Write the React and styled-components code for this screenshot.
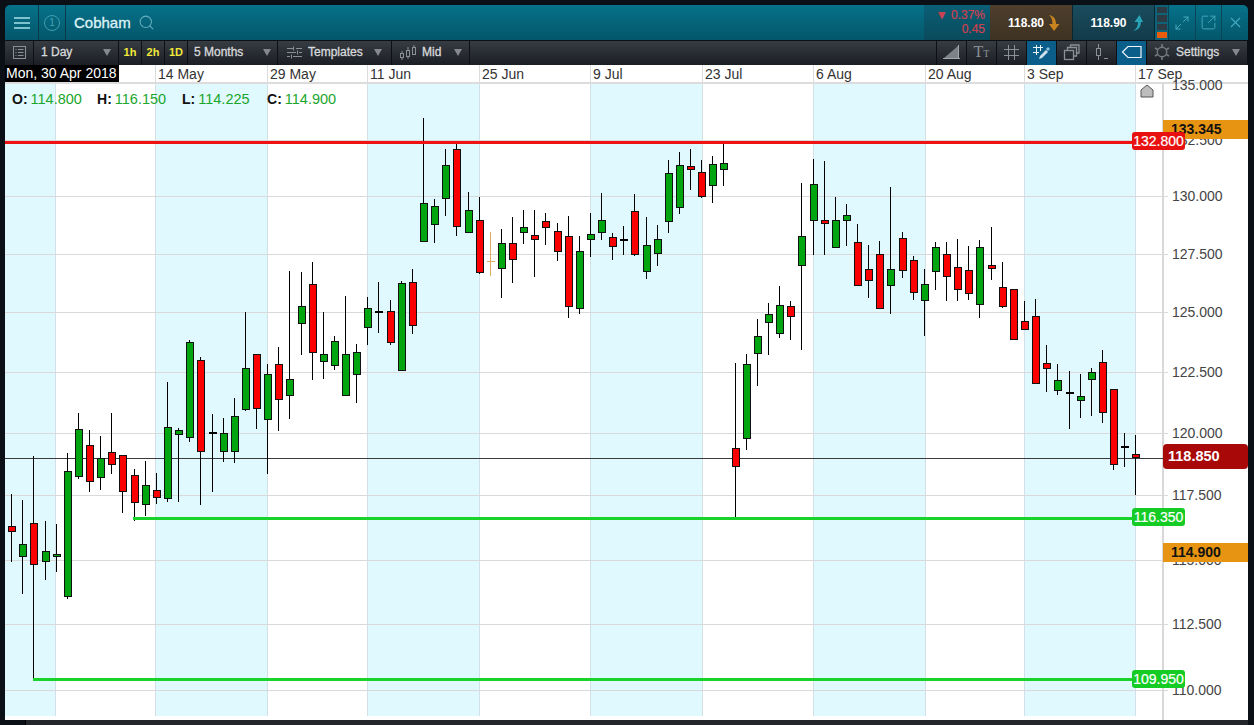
import React from 'react';
import styled, { createGlobalStyle } from 'styled-components';
import { Search, Maximize2, SquareArrowOutUpRight, X } from 'lucide-react';

const GlobalStyle = createGlobalStyle`
  html, body { margin: 0; padding: 0; background: #0a1016; overflow: hidden; }
  * { box-sizing: border-box; }
`;

const FONT = `"Liberation Sans", Arial, sans-serif`;

// high, body top, body bottom, low, kind (g green, r red, d doji, o orange doji)
const CANDLES = [
  [494, 526, 532, 562, 'r'], [500, 544, 557, 594, 'g'], [456, 523, 565, 679, 'r'], [521, 551, 562, 580, 'g'],
  [524, 554, 557, 572, 'g'], [453, 471, 597, 599, 'g'], [413, 429, 477, 479, 'g'], [430, 445, 482, 492, 'r'],
  [436, 458, 478, 490, 'g'], [413, 452, 465, 474, 'r'], [455, 455, 492, 513, 'r'], [469, 475, 503, 521, 'r'],
  [461, 485, 505, 516, 'g'], [473, 490, 498, 504, 'r'], [382, 427, 499, 502, 'g'], [428, 430, 435, 502, 'g'],
  [340, 342, 438, 442, 'g'], [357, 360, 452, 505, 'r'], [414, 432, 433, 492, 'd'], [418, 433, 452, 462, 'g'],
  [398, 416, 452, 463, 'g'], [312, 368, 410, 411, 'g'], [354, 354, 409, 429, 'r'], [364, 374, 420, 474, 'g'],
  [347, 364, 400, 431, 'r'], [271, 379, 396, 419, 'g'], [272, 306, 324, 355, 'g'], [262, 284, 353, 380, 'r'],
  [312, 354, 362, 379, 'g'], [336, 341, 366, 370, 'g'], [296, 354, 396, 396, 'g'], [344, 352, 375, 403, 'g'],
  [297, 308, 328, 345, 'g'], [282, 311, 312, 333, 'd'], [300, 311, 343, 345, 'r'], [281, 283, 371, 371, 'g'],
  [269, 282, 326, 334, 'r'], [118, 203, 242, 242, 'g'], [199, 206, 225, 243, 'g'], [149, 165, 199, 216, 'g'],
  [143, 149, 227, 236, 'r'], [192, 210, 233, 233, 'g'], [197, 220, 273, 274, 'r'], [232, 261, 262, 276, 'o'],
  [229, 243, 269, 298, 'g'], [217, 243, 260, 283, 'r'], [210, 227, 233, 244, 'g'], [210, 235, 240, 277, 'r'],
  [213, 221, 228, 245, 'r'], [223, 231, 252, 261, 'r'], [216, 236, 307, 318, 'r'], [236, 251, 309, 314, 'g'],
  [213, 234, 240, 257, 'g'], [193, 220, 233, 240, 'g'], [233, 237, 247, 260, 'r'], [226, 239, 240, 255, 'd'],
  [194, 211, 255, 256, 'r'], [217, 245, 272, 279, 'g'], [225, 239, 254, 266, 'g'], [160, 173, 222, 233, 'g'],
  [152, 165, 208, 214, 'g'], [149, 166, 170, 190, 'r'], [160, 172, 197, 198, 'r'], [156, 164, 186, 203, 'g'],
  [143, 163, 170, 186, 'g'], [363, 448, 467, 517, 'r'], [354, 364, 439, 450, 'g'], [319, 336, 354, 386, 'g'],
  [303, 314, 323, 355, 'g'], [286, 305, 334, 338, 'g'], [301, 306, 317, 340, 'r'], [183, 236, 266, 350, 'g'],
  [159, 184, 221, 255, 'g'], [161, 220, 224, 255, 'r'], [197, 220, 248, 248, 'g'], [204, 215, 221, 246, 'g'],
  [224, 242, 286, 286, 'r'], [245, 269, 281, 298, 'r'], [241, 254, 309, 309, 'r'], [187, 269, 286, 314, 'g'],
  [232, 238, 271, 278, 'r'], [256, 260, 293, 300, 'r'], [269, 284, 301, 336, 'g'], [242, 247, 272, 290, 'g'],
  [242, 254, 277, 301, 'r'], [239, 267, 290, 301, 'r'], [246, 270, 294, 300, 'r'], [240, 247, 305, 318, 'g'],
  [227, 265, 269, 280, 'r'], [262, 287, 307, 308, 'r'], [289, 289, 340, 340, 'r'], [301, 321, 330, 330, 'r'],
  [299, 316, 384, 384, 'r'], [345, 363, 369, 392, 'r'], [364, 380, 391, 395, 'g'], [371, 392, 393, 429, 'd'],
  [374, 396, 401, 418, 'g'], [368, 372, 380, 416, 'g'], [350, 362, 413, 423, 'r'], [389, 389, 465, 470, 'r'],
  [433, 446, 447, 467, 'd'], [435, 454, 458, 495, 'r'],
];

const BANDS = [[5, 55], [155, 267], [367, 479], [590, 702], [813, 925], [1024, 1135]];
const V_LINES = [55, 155, 267, 367, 479, 590, 702, 813, 925, 1024, 1135];
const PRICES = [
  ['135.000', 85], ['132.500', 140], ['130.000', 196], ['127.500', 254], ['125.000', 312], ['122.500', 372],
  ['120.000', 433], ['117.500', 495], ['115.000', 560], ['112.500', 624], ['110.000', 690],
];
const DATES = [
  ['14 May', 112], ['29 May', 100], ['11 Jun', 112], ['25 Jun', 111], ['9 Jul', 112],
  ['23 Jul', 111], ['6 Aug', 112], ['20 Aug', 99], ['3 Sep', 111], ['17 Sep', 113],
];
const OHLC = [['O', '114.800'], ['H', '116.150'], ['L', '114.225'], ['C', '114.900']];

const Page = styled.div`
  width: 1254px;
  height: 725px;
  padding: 5px 6px 0 5px;
  background: #0a1016;
  display: flex;
  flex-direction: column;
  font-family: ${FONT};
`;

const TopBar = styled.header`
  height: 35px;
  flex: none;
  display: flex;
  align-items: stretch;
  background: linear-gradient(#06728a, #04566a);
  border-radius: 5px 5px 0 0;
  overflow: hidden;
`;

const TopCell = styled.div`
  width: ${p => p.$w}px;
  flex: none;
  display: flex;
  align-items: center;
  justify-content: center;
  border-right: 1px solid #0a3a48;
  color: #3f9fb3;
`;

const Burger = styled.div`
  width: 16px;
  height: 12px;
  border-top: 2px solid #7cc3cf;
  border-bottom: 2px solid #7cc3cf;
  position: relative;
  &::after {
    content: '';
    position: absolute;
    left: 0;
    right: 0;
    top: 3px;
    height: 2px;
    background: #7cc3cf;
  }
`;

const Circled = styled.div`
  width: 16px;
  height: 16px;
  border: 1.5px solid #3fa0ae;
  border-radius: 50%;
  color: #3fa0ae;
  font-size: 11px;
  line-height: 13px;
  text-align: center;
`;

const Title = styled.div`
  display: flex;
  align-items: center;
  gap: 7px;
  padding-left: 8px;
  flex: 1;
  color: #dff3f6;
  font-size: 15px;
  -webkit-text-stroke: 0.3px #dff3f6;
`;

const ChangeBox = styled.div`
  width: 66px;
  flex: none;
  padding: 3px 5px 0 0;
  background: linear-gradient(#0a5f76, #0a4a5c);
  color: #cf4150;
  font-size: 12px;
  line-height: 14px;
  text-align: right;
  -webkit-text-stroke: 0.2px #cf4150;
`;

const Quote = styled.div`
  width: ${p => p.$w}px;
  flex: none;
  display: flex;
  align-items: center;
  justify-content: center;
  gap: 4px;
  padding-left: 6px;
  color: #fff;
  font-size: 12px;
  font-weight: bold;
  background: ${p => (p.$sell ? 'linear-gradient(#4e3f2c, #3e3222)' : 'linear-gradient(#1a4d5e, #133a49)')};
  border-right: 1px solid #0a2630;
`;

const Signal = styled.div`
  width: 13px;
  flex: none;
  padding: 2px 1px 2px 2px;
  display: flex;
  flex-direction: column;
  gap: 2px;
  background: #0e6378;
`;

const SignalBar = styled.div`
  flex: 1;
  background: ${p => (p.$on ? '#e85c0c' : '#2d3b45')};
`;

const WinButton = styled.div`
  width: ${p => p.$w}px;
  flex: none;
  display: flex;
  align-items: center;
  justify-content: center;
  color: #47abc0;
  border-left: 1px solid #0a4556;
`;

const ToolBar = styled.nav`
  height: 24px;
  margin-top: 1px;
  flex: none;
  display: flex;
  align-items: stretch;
  background: linear-gradient(#373c43, #1b1e23);
  color: #d8dadc;
  font-size: 12px;
`;

const Tool = styled.div`
  width: ${p => p.$w}px;
  flex: none;
  display: flex;
  align-items: center;
  gap: 6px;
  padding: 0 ${p => p.$pad ?? 6}px 2px;
  justify-content: ${p => (p.$center ? 'center' : 'flex-start')};
  border-right: 1px solid #0d0f12;
  background: ${p => (p.$active ? '#0b5d8a' : 'transparent')};
  color: ${p => (p.$active ? '#e4eef3' : '#8b9096')};
`;

const ToolLabel = styled.span`
  flex: 1;
  color: #d8dadc;
  white-space: nowrap;
  -webkit-text-stroke: 0.3px #d8dadc;
`;

const Quick = styled.span`
  color: #f2e93a;
  font-size: 11px;
  font-weight: bold;
`;

const Caret = styled.i`
  width: 0;
  height: 0;
  flex: none;
  border-left: 4px solid transparent;
  border-right: 4px solid transparent;
  border-top: 7px solid #85898e;
`;

const Spacer = styled.div`
  flex: 1;
  border-right: 1px solid #0d0f12;
`;

const TtGlyph = styled.span`
  font-family: "Liberation Serif", serif;
  font-size: 16px;
  color: #8b9096;
  small { font-size: 10px; }
`;

const ChartArea = styled.main`
  flex: 1;
  display: flex;
  flex-direction: column;
  background: #fff;
  min-height: 0;
`;

const DateAxis = styled.div`
  height: 19px;
  flex: none;
  display: flex;
  background: #fff;
  border-bottom: 2px solid #dcdcdc;
  font-size: 14px;
  line-height: 18px;
  color: #333;
`;

const DateStart = styled.div`
  width: 150px;
  flex: none;
`;

const DateBadge = styled.span`
  display: inline-block;
  width: 114px;
  padding-left: 1px;
  background: #000;
  color: #fff;
  white-space: nowrap;
  height: 17px;
  line-height: 17px;
  vertical-align: top;
`;

const DateCell = styled.div`
  width: ${p => p.$w}px;
  flex: none;
  padding-left: 2px;
  border-left: 1px solid #dcdcdc;
  white-space: nowrap;
`;

const Plot = styled.div`
  position: relative;
  flex: 1;
  min-height: 0;
`;

const ChartSvg = styled.svg`
  display: block;
  overflow: visible;
  position: relative;
`;

const PriceText = styled.text`
  font-family: ${FONT};
  font-size: 14px;
  fill: #444;
`;

const Legend = styled.div`
  position: absolute;
  left: 7px;
  top: 7px;
  display: flex;
  font-size: 14.5px;
  line-height: 17px;
`;

const LegendItem = styled.div`
  width: 85px;
  display: flex;
  gap: 3px;
  color: #1aa52b;
  b { color: #111; font-size: 14px; }
`;

const Marker = styled.svg`
  position: absolute;
  left: 1135px;
  top: 0;
`;

const LevelTag = styled.div`
  position: absolute;
  left: 1127px;
  top: ${p => p.$top}px;
  width: 53px;
  height: 18px;
  border-radius: 3px;
  background: ${p => p.$bg};
  color: #fff;
  font-size: 14px;
  line-height: 18px;
  text-align: center;
  -webkit-text-stroke: 0.2px #fff;
`;

const AxisTag = styled.div`
  position: absolute;
  left: 1158px;
  right: 0;
  top: ${p => p.$top}px;
  height: 19px;
  padding-left: 8px;
  background: #e79412;
  color: #111;
  font-size: 14px;
  font-weight: bold;
  line-height: 19px;
`;

const LastTag = styled.div`
  position: absolute;
  left: 1158px;
  right: 0;
  top: 360px;
  height: 25px;
  padding-left: 5px;
  border-radius: 4px;
  background: #a80808;
  color: #fff;
  font-size: 14.5px;
  font-weight: bold;
  line-height: 25px;
`;

const BottomBar = styled.div`
  height: 5px;
  flex: none;
  background: #23272b;
  margin-left: 20px;
  border-left: 1px solid #000;
`;

function candleX(i) {
  return Math.floor(11.67 + 11.13 * i);
}

function Candle({ c, i }) {
  const [high, top, bottom, low, kind] = c;
  const x = candleX(i);
  if (kind === 'd' || kind === 'o') {
    const col = kind === 'o' ? '#dcae62' : '#000';
    return (
      <g fill={col}>
        <rect x={x} y={high} width={1} height={low - high} />
        <rect x={x - 3} y={top} width={8} height={kind === 'o' ? 1 : 2} />
      </g>
    );
  }
  return (
    <g>
      <rect x={x} y={high} width={1} height={low - high} fill="#000" />
      <rect
        x={x - 2.5}
        y={top + 0.5}
        width={7}
        height={bottom - top - 1}
        fill={kind === 'g' ? '#00a50f' : '#fb0000'}
        stroke="#111"
        strokeWidth="1"
      />
    </g>
  );
}

function Chart() {
  return (
    <ChartSvg width="1243" height="636" viewBox="5 84 1243 636" shapeRendering="crispEdges">
      {BANDS.map(([a, b]) => (
        <rect key={a} x={a} y={84} width={b - a} height={632} fill="#e0f9fe" />
      ))}
      {V_LINES.map(x => (
        <rect key={x} x={x} y={84} width={1} height={632} fill="#d3e0e5" />
      ))}
      {PRICES.slice(1).map(([t, y]) => (
        <rect key={t} x={5} y={y} width={1163} height={1} fill="#d9d9d9" />
      ))}
      <rect x={1162} y={84} width={2} height={636} fill="#d8d8d8" />
      {PRICES.map(([t, y]) => (
        <PriceText key={t} x={1172} y={y + 5} shapeRendering="auto">{t}</PriceText>
      ))}
      <rect x={5} y={458} width={1158} height={1} fill="#3b3b3b" />
      {CANDLES.map((c, i) => <Candle key={i} c={c} i={i} />)}
      <rect x={5} y={141} width={1128} height={3} fill="#ef1212" />
      <rect x={133} y={517} width={1000} height={3} fill="#19d32a" />
      <rect x={33} y={678} width={1100} height={3} fill="#19d32a" />
    </ChartSvg>
  );
}

function TopBarView() {
  return (
    <TopBar>
      <TopCell $w={34}><Burger /></TopCell>
      <TopCell $w={27}><Circled>1</Circled></TopCell>
      <Title>
        Cobham
        <Search size={17} color="#63adbc" strokeWidth={1.5} />
      </Title>
      <ChangeBox>
        ▼ 0.37%<br />0.45
      </ChangeBox>
      <Quote $w={83} $sell>
        118.80
        <svg width="12" height="18" viewBox="0 0 12 18">
          <path d="M1 1C6 2 8 5 8 10H11.5L6 17 1 10H4.5C4.5 6 3.5 3 1 1Z" fill="#c8851f" />
        </svg>
      </Quote>
      <Quote $w={82}>
        118.90
        <svg width="12" height="18" viewBox="0 0 12 18">
          <path d="M2 17C6 15 7 12 7 8H3.5L8.5 1 12 8H9.8C10 12 8 16 2 17Z" fill="#2aa5b8" />
        </svg>
      </Quote>
      <Signal>
        <SignalBar /><SignalBar /><SignalBar /><SignalBar $on />
      </Signal>
      <WinButton $w={27}><Maximize2 size={16} strokeWidth={1.5} /></WinButton>
      <WinButton $w={26}><SquareArrowOutUpRight size={17} strokeWidth={1.3} /></WinButton>
      <WinButton $w={27}><X size={17} strokeWidth={1.5} /></WinButton>
    </TopBar>
  );
}

function ToolBarView() {
  return (
    <ToolBar>
      <Tool $w={29} $center $pad={0}>
        <svg width="15" height="15" viewBox="0 0 15 15" fill="none" stroke="currentColor">
          <rect x="1.5" y="1.5" width="12" height="12" />
          <path d="M3.5 4.5h1M6 4.5h5.5M3.5 7.5h1M6 7.5h5.5M3.5 10.5h1M6 10.5h5.5" />
        </svg>
      </Tool>
      <Tool $w={85} $pad={7}><ToolLabel>1 Day</ToolLabel><Caret /></Tool>
      <Tool $w={23} $center $pad={0}><Quick>1h</Quick></Tool>
      <Tool $w={23} $center $pad={0}><Quick>2h</Quick></Tool>
      <Tool $w={23} $center $pad={0}><Quick>1D</Quick></Tool>
      <Tool $w={90}><ToolLabel>5 Months</ToolLabel><Caret /></Tool>
      <Tool $w={114} $pad={9}>
        <svg width="15" height="15" viewBox="0 0 15 15" fill="none" stroke="currentColor">
          <path d="M0 3.5h6M9 3.5h6M0 7.5h9M12 7.5h3M0 11.5h3M6 11.5h9M6.5 1.5v4M10.5 5.5v4M4.5 9.5v4" />
        </svg>
        <ToolLabel>Templates</ToolLabel>
        <Caret />
      </Tool>
      <Tool $w={78} $pad={7}>
        <svg width="17" height="15" viewBox="0 0 17 15" fill="none" stroke="currentColor">
          <rect x="1.5" y="8.5" width="3" height="4" />
          <rect x="7.5" y="5.5" width="3" height="6" />
          <rect x="13.5" y="2.5" width="3" height="7" />
          <path d="M9 2v3M9 12v2M15 0v2M3 6v2M3 13v2" />
        </svg>
        <ToolLabel>Mid</ToolLabel>
        <Caret />
      </Tool>
      <Spacer />
      <Tool $w={30} $center $pad={0}>
        <svg width="18" height="16" viewBox="0 0 18 16" fill="none">
          <path d="M1 14L15 2V14Z" fill="#7d8287" />
          <path d="M15.5 1V15M0 14.5H17" stroke="#a4a8ac" />
        </svg>
      </Tool>
      <Tool $w={30} $center $pad={0}><TtGlyph>T<small>T</small></TtGlyph></Tool>
      <Tool $w={30} $center $pad={0}>
        <svg width="17" height="17" viewBox="0 0 17 17" stroke="currentColor" fill="none">
          <path d="M5.5 1v15M11.5 1v15M1 5.5h15M1 11.5h15" />
        </svg>
      </Tool>
      <Tool $w={30} $center $pad={0} $active>
        <svg width="18" height="17" viewBox="0 0 18 17" fill="none" stroke="#eef5f8">
          <path d="M3.5 1v10M7.5 1v6M0 3.5h10M0 8.5h6" />
          <path d="M6 15l1-3 6-6 2 2-6 6z" fill="#cfe3ee" stroke="none" />
          <path d="M13 5l2-2 2 2-2 2z" fill="#8cc0dc" stroke="none" />
        </svg>
      </Tool>
      <Tool $w={30} $center $pad={0}>
        <svg width="17" height="17" viewBox="0 0 17 17" fill="none" stroke="currentColor" strokeWidth="1.3">
          <rect x="1.5" y="6.5" width="9" height="9" />
          <path d="M4.5 6V3.5H13.5V12H11M7.5 3V1H16V9H14" />
        </svg>
      </Tool>
      <Tool $w={30} $center $pad={0}>
        <svg width="16" height="18" viewBox="0 0 16 18" fill="none" stroke="currentColor">
          <rect x="2.5" y="5.5" width="4" height="7" />
          <path d="M4.5 1v4M4.5 13v4M10 15.5h4" />
        </svg>
      </Tool>
      <Tool $w={30} $center $pad={0} $active>
        <svg width="22" height="14" viewBox="0 0 22 14" fill="none" stroke="#eef5f8" strokeWidth="1.2">
          <path d="M1.5 7L7 1.5H20V12.5H7Z" />
        </svg>
      </Tool>
      <Tool $w={101} $pad={7}>
        <svg width="16" height="16" viewBox="0 0 16 16" fill="none" stroke="#767b80">
          <circle cx="8" cy="8" r="4.7" strokeWidth="1.4" />
          <path d="M8 0v3M8 13v3M1 4l2.6 1.5M12.4 10.5L15 12M1 12l2.6-1.5M12.4 5.5L15 4" strokeWidth="1.6" />
        </svg>
        <ToolLabel>Settings</ToolLabel>
        <Caret />
      </Tool>
    </ToolBar>
  );
}

export default function App() {
  return (
    <>
      <GlobalStyle />
      <Page>
        <TopBarView />
        <ToolBarView />
        <ChartArea>
          <DateAxis>
            <DateStart><DateBadge>Mon, 30 Apr 2018</DateBadge></DateStart>
            {DATES.map(([t, w]) => <DateCell key={t} $w={w}>{t}</DateCell>)}
          </DateAxis>
          <Plot>
            <Chart />
            <Legend>
              {OHLC.map(([k, v]) => (
                <LegendItem key={k}><b>{k}:</b>{v}</LegendItem>
              ))}
            </Legend>
            <Marker width="14" height="14" viewBox="0 0 14 14">
              <path d="M1 13V6L7 1l6 5v7Z" fill="#bdbdbd" stroke="#555" />
            </Marker>
            <AxisTag $top={36}>133.345</AxisTag>
            <LevelTag $top={48} $bg="#e81010">132.800</LevelTag>
            <LastTag>118.850</LastTag>
            <LevelTag $top={424} $bg="#14cc24">116.350</LevelTag>
            <AxisTag $top={459}>114.900</AxisTag>
            <LevelTag $top={586} $bg="#14cc24">109.950</LevelTag>
          </Plot>
        </ChartArea>
        <BottomBar />
      </Page>
    </>
  );
}
